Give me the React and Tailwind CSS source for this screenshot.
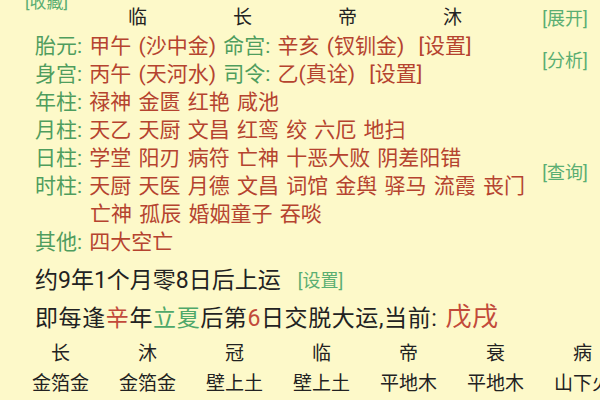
import React from "react";

const font = { fontFamily: 'Roboto, "Noto Sans CJK SC", sans-serif' };

const pillars = [
    { label: "年柱", value: "禄神 金匮 红艳 咸池" },
    { label: "月柱", value: "天乙 天厨 文昌 红鸾 绞 六厄 地扫" },
    { label: "日柱", value: "学堂 阳刃 病符 亡神 十恶大败 阴差阳错" },
    { label: "时柱", value: "天厨 天医 月德 文昌 词馆 金舆 驿马 流霞 丧门" },
];

const stages = ["长", "沐", "冠", "临", "帝", "衰", "病"];
const nayin = ["金箔金", "金箔金", "壁上土", "壁上土", "平地木", "平地木", "山下火"];
const gods = ["比肩", "劫财", "偏印", "正印", "七杀", "正官", "偏财"];

function Label({ children }) {
    return <span className="text-[#4f9d5e]">{children}: </span>;
}

export default function App() {
    return (
        <div style={font} className="w-[600px] h-[400px] overflow-hidden bg-[#fdf9c9] text-[#222]">
            {/* top link */}
            <div className="-mt-[8px] h-[12px] pl-[25px] text-[17px] leading-[20px] text-[#5aae72]">[收藏]</div>

            <div className="grid grid-cols-[530px_70px] grid-rows-[repeat(9,28px)]">
                <div className="col-start-1 row-start-1 flex pl-[85px] text-[19px] leading-[28px]">
                    {["临", "长", "帝", "沐"].map((s) => (
                        <div key={s} className="w-[105px] text-center">{s}</div>
                    ))}
                </div>

                <div className="col-start-1 row-start-2 pl-[35px] text-[21px] leading-[28px] [word-spacing:2px] whitespace-nowrap text-[#b5432f]">
                    <Label>胎元</Label>甲午 (沙中金) <Label>命宫</Label>辛亥 (钗钏金) <span className="ml-[7px]">[设置]</span>
                </div>
                <div className="col-start-1 row-start-3 pl-[35px] text-[21px] leading-[28px] [word-spacing:2px] whitespace-nowrap text-[#b5432f]">
                    <Label>身宫</Label>丙午 (天河水) <Label>司令</Label>乙(真诠) <span className="ml-[7px]">[设置]</span>
                </div>

                {pillars.map((p, i) => (
                    <div
                        key={p.label}
                        className="col-start-1 pl-[35px] text-[21px] leading-[28px] [word-spacing:2px] whitespace-nowrap text-[#b5432f]"
                        style={{ gridRowStart: i + 4 }}
                    >
                        <Label>{p.label}</Label>{p.value}
                    </div>
                ))}
                <div className="col-start-1 row-start-8 pl-[90px] text-[21px] leading-[28px] [word-spacing:2px] whitespace-nowrap text-[#b5432f]">
                    亡神 孤辰 婚姻童子 吞啖
                </div>
                <div className="col-start-1 row-start-9 pl-[35px] text-[21px] leading-[28px] [word-spacing:2px] whitespace-nowrap text-[#b5432f]">
                    <Label>其他</Label>四大空亡
                </div>

                {/* right side links */}
                <div className="col-start-2 row-start-1 flex items-center justify-center text-[18px] text-[#5aae72]">[展开]</div>
                <div className="col-start-2 row-start-2 row-span-2 flex items-center justify-center text-[18px] text-[#5aae72]">[分析]</div>
                <div className="col-start-2 row-start-6 row-span-2 flex items-center justify-center text-[18px] text-[#5aae72]">[查询]</div>
            </div>

            <div className="mt-[8px] flex items-center pl-[35px] leading-[34px] whitespace-nowrap">
                <span className="text-[23px]">约9年1个月零8日后上运</span>
                <span className="ml-[17px] text-[18px] text-[#5aae72]">[设置]</span>
            </div>

            <div className="flex items-baseline pl-[35px] text-[23px] leading-[38px] tracking-[0.6px] whitespace-nowrap">
                <span>
                    即每逢<span className="text-[#c24a3a]">辛</span>年<span className="text-[#4fa86a]">立夏</span>后第<span className="text-[#c24a3a]">6</span>日交脱大运,当前:
                </span>
                <span className="ml-[8px] text-[26px] text-[#c24a3a]">戊戌</span>
            </div>

            <div className="flex pl-[17px] text-[19px] leading-[32px]">
                {stages.map((s, i) => (
                    <div key={i} className="w-[87px] shrink-0 text-center">{s}</div>
                ))}
            </div>
            <div className="flex pl-[17px] text-[19px] leading-[27px] whitespace-nowrap">
                {nayin.map((s, i) => (
                    <div key={i} className="w-[87px] shrink-0 text-center">{s}</div>
                ))}
            </div>
            <div className="flex pl-[17px] text-[19px] leading-[27px] whitespace-nowrap">
                {gods.map((s, i) => (
                    <div key={i} className="w-[87px] shrink-0 text-center">{s}</div>
                ))}
            </div>
        </div>
    );
}
